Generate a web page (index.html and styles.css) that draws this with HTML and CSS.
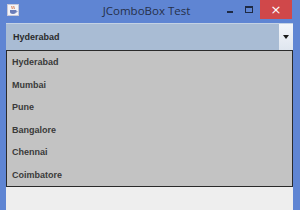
FILE: index.html
```html
<!DOCTYPE html>
<html>
<head>
<meta charset="utf-8">
<link rel="stylesheet" href="styles.css">
</head>
<body>
<div class="window">
  <div class="titlebar">
    <div class="app-icon">
      <svg width="12" height="12" viewBox="0 0 12 12">
        <rect x="0.5" y="0.5" width="11" height="11" fill="#f4f4f8" stroke="#c8c8d8"/>
        <path d="M5 2 C4 3 6 4 5 5 M7 2 C6 3 8 4 7 5" stroke="#d0602a" stroke-width="0.9" fill="none"/>
        <path d="M3 6 H9 V8 C9 9 8 10 6 10 C4 10 3 9 3 8 Z" fill="#6a7cb8"/>
        <path d="M9 7 H10 V8 H9" stroke="#6a7cb8" stroke-width="0.8" fill="none"/>
      </svg>
    </div>
    <div class="title">JComboBox Test</div>
    <div class="controls">
      <span class="btn min"><span class="dash"></span></span>
      <span class="btn max"><span class="box"></span></span>
      <span class="btn close">×</span>
    </div>
  </div>
  <div class="content">
    <div class="combo">
      <span class="combo-text">Hyderabad</span>
      <span class="arrow-btn"><span class="arrow"></span></span>
    </div>
    <ul class="list">
      <li>Hyderabad</li>
      <li>Mumbai</li>
      <li>Pune</li>
      <li>Bangalore</li>
      <li>Chennai</li>
      <li>Coimbatore</li>
    </ul>
    <div class="panel"></div>
  </div>
</div>
</body>
</html>
```
FILE: styles.css
```css
html, body {
  margin: 0;
  padding: 0;
}
body {
  width: 300px;
  height: 210px;
  overflow: hidden;
  font-family: "Liberation Sans", Arial, sans-serif;
}
.window {
  width: 300px;
  height: 210px;
  background: #5f85d3;
  display: flex;
  flex-direction: column;
}
.titlebar {
  height: 23px;
  display: flex;
  align-items: flex-start;
}
.app-icon {
  width: 12px;
  height: 12px;
  margin: 4px 0 0 7px;
}
.app-icon svg {
  display: block;
}
.title {
  flex: 1;
  text-align: center;
  font-family: "Open Sans", "DejaVu Sans", sans-serif;
  font-size: 11.5px;
  color: #26304a;
  line-height: 22px;
  padding-left: 52px;
}
.controls {
  display: flex;
  margin-right: 8px;
}
.btn {
  height: 19px;
  display: flex;
  align-items: center;
  justify-content: center;
}
.min {
  width: 16px;
}
.dash {
  width: 6px;
  height: 2px;
  background: #1e2a44;
  margin-top: 4px;
}
.max {
  width: 22px;
}
.box {
  width: 6px;
  height: 4px;
  border: 1px solid #1e2a44;
  border-top-width: 2px;
  margin-top: -1px;
}
.close {
  width: 32px;
  background: #d0484a;
  color: #ffffff;
  font-size: 13px;
  line-height: 17px;
  font-family: "DejaVu Sans", sans-serif;
}
.content {
  flex: 1;
  margin: 0 7px 0 6px;
  display: flex;
  flex-direction: column;
}
.combo {
  height: 26px;
  background: #a9bcd4;
  border-top: 1px solid #c4d2e4;
  display: flex;
  align-items: center;
}
.combo-text {
  flex: 1;
  padding-left: 7px;
  font-size: 9px;
  font-weight: bold;
  color: #2a2a2a;
}
.arrow-btn {
  width: 14px;
  height: 26px;
  background: linear-gradient(#f4f6fa, #dfe6ef);
  display: flex;
  align-items: center;
  justify-content: center;
}
.arrow {
  width: 0;
  height: 0;
  border-left: 3.5px solid transparent;
  border-right: 3.5px solid transparent;
  border-top: 4px solid #1a1a1a;
}
.list {
  margin: 0;
  padding: 0;
  list-style: none;
  height: 135px;
  background: #c3c3c3;
  border: 1px solid #2a2a2a;
  display: flex;
  flex-direction: column;
  justify-content: space-evenly;
}
.list li {
  padding-left: 5px;
  font-size: 9px;
  font-weight: bold;
  color: #3a3a3a;
  height: 22.5px;
  line-height: 22.5px;
}
.panel {
  flex: 1;
  background: #eeeeee;
}
```
